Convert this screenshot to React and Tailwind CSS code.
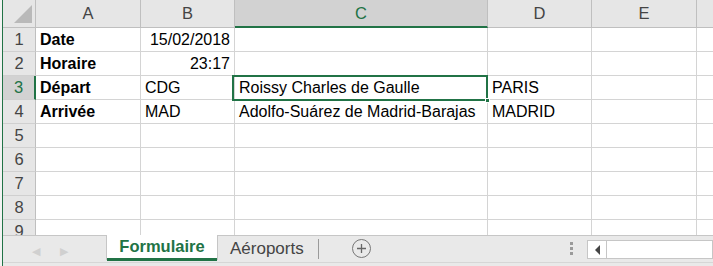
import React from 'react';

const cols = [
  { key: 'A', w: 'w-[105px]' },
  { key: 'B', w: 'w-[94px]' },
  { key: 'C', w: 'w-[253px]' },
  { key: 'D', w: 'w-[104px]' },
  { key: 'E', w: 'w-[105px]' },
  { key: 'F', w: 'w-[30px]' },
];

const rows = [
  { n: 1, A: 'Date', B: '15/02/2018', bRight: true },
  { n: 2, A: 'Horaire', B: '23:17', bRight: true },
  { n: 3, A: 'Départ', B: 'CDG', C: 'Roissy Charles de Gaulle', D: 'PARIS' },
  { n: 4, A: 'Arrivée', B: 'MAD', C: 'Adolfo-Suárez de Madrid-Barajas', D: 'MADRID' },
  { n: 5 },
  { n: 6 },
  { n: 7 },
  { n: 8 },
  { n: 9 },
];

const HeaderRow = () => (
  <div className="flex h-[28px] shrink-0">
    <div className="w-[33px] shrink-0 h-full bg-[#e6e6e6] border-r border-b border-[#bfbfbf] relative overflow-hidden">
      <div className="absolute right-[3px] bottom-[4px] w-0 h-0 border-l-[18px] border-l-transparent border-b-[18px] border-b-[#b9b9b9]" />
    </div>
    {cols.map((c) => {
      const sel = c.key === 'C';
      return (
        <div
          key={c.key}
          className={`${c.w} shrink-0 h-full flex items-center justify-center text-[16.5px] border-r ${
            sel
              ? 'bg-[#d2d2d2] text-[#217346] border-b-2 border-b-[#217346] border-r-[#bfbfbf]'
              : 'bg-[#e6e6e6] text-[#444] border-b border-b-[#bfbfbf] border-r-[#bfbfbf]'
          }`}
        >
          {c.key === 'F' ? '' : c.key}
        </div>
      );
    })}
  </div>
);

const Row = ({ r }) => {
  const sel = r.n === 3;
  return (
    <div className="flex h-[24px] shrink-0">
      <div
        className={`w-[33px] shrink-0 h-full flex items-center justify-center text-[16.5px] border-b border-[#d0d0d0] ${
          sel ? 'bg-[#d2d2d2] text-[#217346] border-r-2 border-r-[#217346]' : 'bg-[#e6e6e6] text-[#444] border-r border-r-[#bfbfbf]'
        }`}
      >
        {r.n}
      </div>
      {cols.map((c) => {
        const val = r[c.key];
        const right = c.key === 'B' && r.bRight;
        return (
          <div
            key={c.key}
            className={`${c.w} shrink-0 h-full bg-white border-r border-b border-[#d4d4d4] flex items-end pb-[1px] px-[4px] text-[16px] leading-[20px] text-black whitespace-nowrap overflow-visible ${
              right ? 'justify-end' : 'justify-start'
            } ${c.key === 'A' ? 'font-bold' : ''}`}
          >
            {val}
          </div>
        );
      })}
    </div>
  );
};

const TabBar = () => (
  <div className="flex h-[31px] bg-[#e9e9e9] border-t border-[#c6c6c6] relative">
    <div className="w-[103px] shrink-0 flex items-center gap-[20px] pl-[29px] text-[#d0d0d0] text-[11px]">
      <span>◀</span>
      <span>▶</span>
    </div>
    <div className="w-[112px] shrink-0 bg-white flex flex-col items-center justify-center relative -mt-px h-[25px] border-l border-r border-[#c6c6c6]">
      <span className="text-[16.5px] font-bold text-[#217346] leading-none -mt-[2px]">Formulaire</span>
      <div className="absolute left-0 right-0 bottom-[-1px] h-[3px] bg-[#217346]" />
    </div>
    <div className="flex items-center h-[25px]">
      <span className="ml-[12px] text-[17px] text-[#444] leading-none">Aéroports</span>
      <div className="ml-[14px] w-px h-[20px] bg-[#9a9a9a]" />
      <div className="ml-[33px] w-[19px] h-[19px] rounded-full border border-[#777] flex items-center justify-center">
        <svg width="11" height="11" viewBox="0 0 11 11">
          <path d="M5.5 1v9M1 5.5h9" stroke="#666" strokeWidth="1.3" />
        </svg>
      </div>
    </div>
    <div className="flex-1" />
    <div className="flex flex-col gap-[2px] mr-[14px] h-[25px] justify-center">
      <div className="w-[3px] h-[3px] bg-[#9a9a9a]" />
      <div className="w-[3px] h-[3px] bg-[#9a9a9a]" />
      <div className="w-[3px] h-[3px] bg-[#9a9a9a]" />
    </div>
    <div className="w-[126px] shrink-0 flex mt-[4px] h-[19px] border border-[#c6c6c6] bg-white">
      <div className="w-[19px] flex items-center justify-center border-r border-[#c6c6c6]">
        <div className="w-0 h-0 border-t-[5px] border-t-transparent border-b-[5px] border-b-transparent border-r-[5px] border-r-[#444]" />
      </div>
      <div className="flex-1" />
    </div>
    <div className="absolute left-0 right-0 bottom-[3px] h-px bg-[#d6d6d6]" />
  </div>
);

export default function App() {
  return (
    <div
      className="w-[713px] h-[266px] overflow-hidden bg-white flex"
      style={{ fontFamily: '"Liberation Sans", Arial, sans-serif' }}
    >
      <div className="w-[3px] h-full bg-[#f3f3f3] border-r border-[#217346] shrink-0" />
      <div className="flex-1 flex flex-col min-w-0">
        <div className="h-[235px] overflow-hidden flex flex-col relative">
          <HeaderRow />
          {rows.map((r) => (
            <Row key={r.n} r={r} />
          ))}
          <div className="absolute left-[229px] top-[75px] w-[256px] h-[26px] border-2 border-[#217346] pointer-events-none">
            <div className="absolute right-[-4px] bottom-[-4px] w-[5px] h-[5px] bg-[#217346] border border-white" />
          </div>
        </div>
        <TabBar />
      </div>
    </div>
  );
}
